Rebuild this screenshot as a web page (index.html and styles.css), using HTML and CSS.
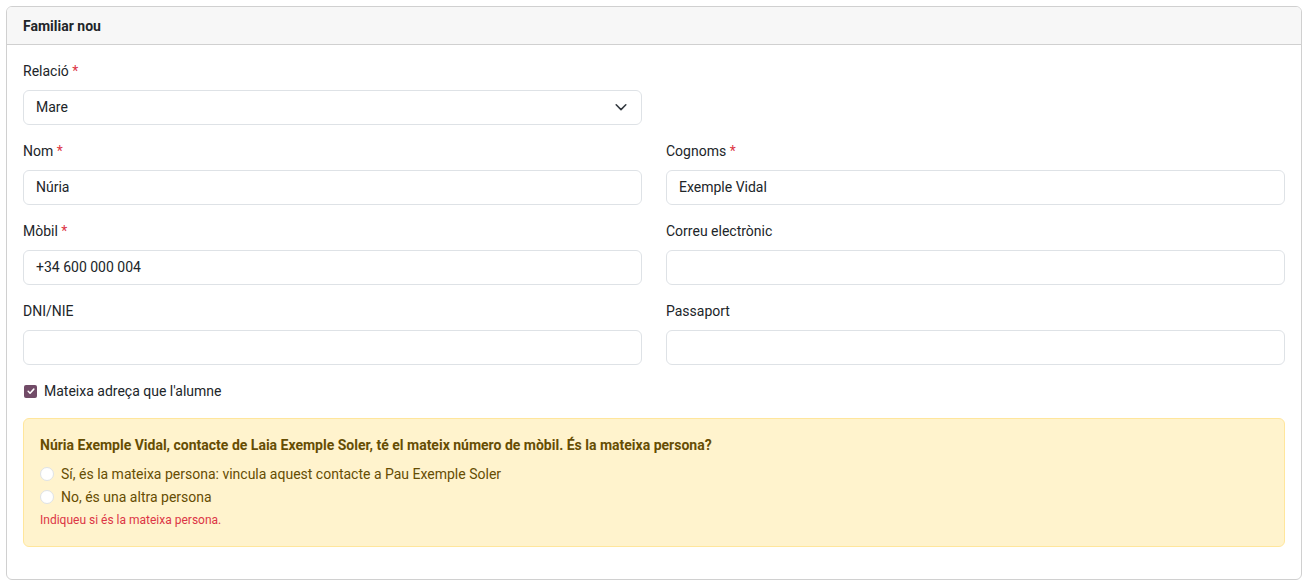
FILE: index.html
```html
<!DOCTYPE html>
<html lang="ca">
<head>
<meta charset="utf-8">
<link rel="stylesheet" href="styles.css">
</head>
<body>
<div class="card">
  <div class="card-header">Familiar nou</div>
  <div class="card-body">
    <div class="grid">
      <div class="field">
        <label class="lbl">Relació <span class="req">*</span></label>
        <div class="input select"><span>Mare</span>
          <svg width="14" height="14" viewBox="0 0 16 16"><path d="M2.5 5.5 8 11l5.5-5.5" fill="none" stroke="#343a40" stroke-width="1.8" stroke-linecap="round" stroke-linejoin="round"/></svg>
        </div>
      </div>
      <div></div>
      <div class="field">
        <label class="lbl">Nom <span class="req">*</span></label>
        <div class="input">Núria</div>
      </div>
      <div class="field">
        <label class="lbl">Cognoms <span class="req">*</span></label>
        <div class="input">Exemple Vidal</div>
      </div>
      <div class="field">
        <label class="lbl">Mòbil <span class="req">*</span></label>
        <div class="input">+34 600 000 004</div>
      </div>
      <div class="field">
        <label class="lbl">Correu electrònic</label>
        <div class="input"></div>
      </div>
      <div class="field">
        <label class="lbl">DNI/NIE</label>
        <div class="input"></div>
      </div>
      <div class="field">
        <label class="lbl">Passaport</label>
        <div class="input"></div>
      </div>
    </div>
    <div class="check-row">
      <span class="checkbox"><svg width="10" height="10" viewBox="0 0 16 16"><path d="M3.5 8.5l3 3 6-6.5" fill="none" stroke="#fff" stroke-width="2.4" stroke-linecap="round" stroke-linejoin="round"/></svg></span>
      <span>Mateixa adreça que l'alumne</span>
    </div>
    <div class="alert">
      <div class="alert-title">Núria Exemple Vidal, contacte de Laia Exemple Soler, té el mateix número de mòbil. És la mateixa persona?</div>
      <div class="radio-row"><span class="radio"></span><span>Sí, és la mateixa persona: vincula aquest contacte a Pau Exemple Soler</span></div>
      <div class="radio-row"><span class="radio"></span><span>No, és una altra persona</span></div>
      <div class="error">Indiqueu si és la mateixa persona.</div>
    </div>
  </div>
</div>
</body>
</html>
```
FILE: styles.css
```css
* { box-sizing: border-box; }
body {
  margin: 6px 1px 0 6px;
  font-family: Roboto, "Liberation Sans", sans-serif;
  font-size: 14px;
  color: #212529;
  background: #fff;
}
.card {
  border: 1px solid #d0d0d0;
  border-radius: 6px;
  height: 574px;
  overflow: hidden;
}
.card-header {
  height: 38px;
  background: #f7f7f7;
  border-bottom: 1px solid #d0d0d0;
  padding: 0 16px;
  display: flex;
  align-items: center;
  font-weight: 700;
  color: #212529;
}
.card-body {
  padding: 16px;
}
.grid {
  display: grid;
  grid-template-columns: 1fr 1fr;
  column-gap: 24px;
  row-gap: 16px;
}
.lbl {
  display: block;
  line-height: 20px;
  margin-bottom: 9px;
}
.req { color: #dc3545; }
.input {
  height: 35px;
  border: 1px solid #dee2e6;
  border-radius: 6px;
  padding: 0 12px 1px;
  display: flex;
  align-items: center;
  background: #fff;
}
.select {
  justify-content: space-between;
  padding-right: 13px;
}
.check-row {
  margin-top: 16px;
  height: 20px;
  display: flex;
  align-items: center;
  gap: 7px;
  padding-left: 1px;
}
.checkbox {
  width: 13px;
  height: 13px;
  border-radius: 2px;
  background: #714b67;
  display: flex;
  align-items: center;
  justify-content: center;
}
.alert {
  margin-top: 17px;
  height: 129px;
  background: #fff3cd;
  border: 1px solid #ffe69c;
  border-radius: 6px;
  padding: 16px 16px;
  color: #664d03;
}
.alert-title {
  font-weight: 700;
  line-height: 20px;
  margin-bottom: 7px;
}
.radio-row {
  display: flex;
  align-items: center;
  gap: 7px;
  height: 23px;
}
.radio {
  width: 14px;
  height: 14px;
  border-radius: 50%;
  border: 1px solid #dee2e6;
  background: #fff;
}
.error {
  margin-top: 4px;
  font-size: 12px;
  line-height: 16px;
  color: #dc3545;
}
```
